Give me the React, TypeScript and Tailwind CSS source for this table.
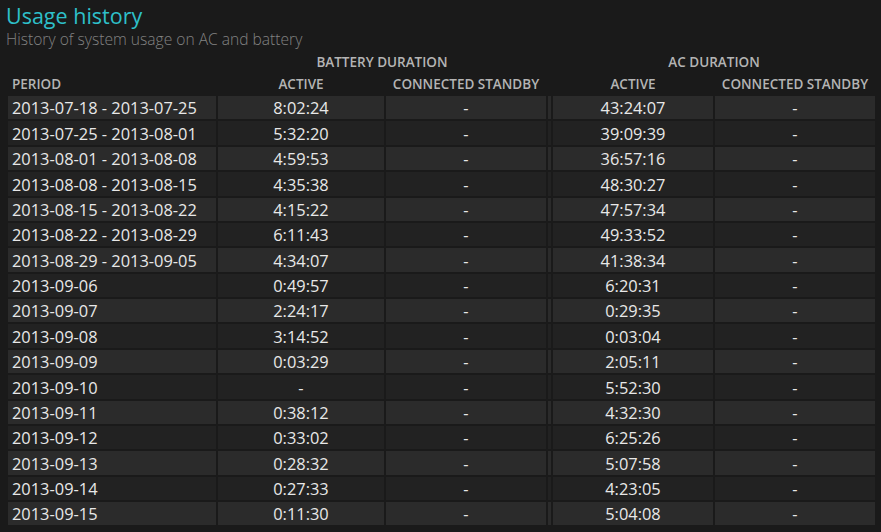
const rows: [string, string, string, string, string][] = [
  ['2013-07-18 - 2013-07-25', '8:02:24', '-', '43:24:07', '-'],
  ['2013-07-25 - 2013-08-01', '5:32:20', '-', '39:09:39', '-'],
  ['2013-08-01 - 2013-08-08', '4:59:53', '-', '36:57:16', '-'],
  ['2013-08-08 - 2013-08-15', '4:35:38', '-', '48:30:27', '-'],
  ['2013-08-15 - 2013-08-22', '4:15:22', '-', '47:57:34', '-'],
  ['2013-08-22 - 2013-08-29', '6:11:43', '-', '49:33:52', '-'],
  ['2013-08-29 - 2013-09-05', '4:34:07', '-', '41:38:34', '-'],
  ['2013-09-06', '0:49:57', '-', '6:20:31', '-'],
  ['2013-09-07', '2:24:17', '-', '0:29:35', '-'],
  ['2013-09-08', '3:14:52', '-', '0:03:04', '-'],
  ['2013-09-09', '0:03:29', '-', '2:05:11', '-'],
  ['2013-09-10', '-', '-', '5:52:30', '-'],
  ['2013-09-11', '0:38:12', '-', '4:32:30', '-'],
  ['2013-09-12', '0:33:02', '-', '6:25:26', '-'],
  ['2013-09-13', '0:28:32', '-', '5:07:58', '-'],
  ['2013-09-14', '0:27:33', '-', '4:23:05', '-'],
  ['2013-09-15', '0:11:30', '-', '5:04:08', '-'],
];

export default function App() {
  return (
    <div
      className="h-[532px] w-[881px] overflow-hidden bg-[#1a1a1a] pl-[6px] text-[#e8e8e8]"
      style={{ fontFamily: '"Open Sans", "Noto Sans", sans-serif' }}
    >
      <h1 className="pt-[2px] text-[21.5px] leading-[28px] text-[#2ec0ca]">Usage history</h1>
      <p className="text-[15.6px] leading-[19px] font-light text-[#828282]">
        History of system usage on AC and battery
      </p>

      <table className="border-separate border-spacing-[2px] text-[16.4px]">
        <colgroup>
          <col className="w-[208px]" />
          <col className="w-[166px]" />
          <col className="w-[160px]" />
          <col className="w-[3px]" />
          <col className="w-[160px]" />
          <col className="w-[160px]" />
        </colgroup>
        <thead className="text-[13.5px] leading-none font-semibold uppercase text-[#b4b4b4]">
          <tr className="h-[20px]">
            <th className="p-0" />
            <th colSpan={2} className="p-0 pt-[3px] text-center font-semibold">
              Battery Duration
            </th>
            <th className="p-0" />
            <th colSpan={2} className="p-0 pt-[3px] text-center font-semibold">
              AC Duration
            </th>
          </tr>
          <tr className="h-[21px]">
            <th className="p-0 pl-[4px] pt-[2px] text-left font-semibold">Period</th>
            <th className="p-0 pt-[2px] text-center font-semibold">Active</th>
            <th className="p-0 pt-[2px] text-center font-semibold">Connected Standby</th>
            <th className="p-0" />
            <th className="p-0 pt-[2px] text-center font-semibold">Active</th>
            <th className="p-0 pt-[2px] text-center font-semibold">Connected Standby</th>
          </tr>
        </thead>
        <tbody>
          {rows.map((r, i) => {
            const bg = i % 2 === 0 ? 'bg-[#2b2b2b]' : 'bg-[#222222]';
            return (
              <tr key={r[0]} className="h-[23.375px]">
                <td className={`${bg} p-0 pl-[4px] pt-[2px] leading-none`}>{r[0]}</td>
                <td className={`${bg} p-0 pt-[2px] text-center leading-none`}>{r[1]}</td>
                <td className={`${bg} p-0 pt-[2px] text-center leading-none`}>{r[2]}</td>
                <td className={`${bg} p-0`} />
                <td className={`${bg} p-0 pt-[2px] text-center leading-none`}>{r[3]}</td>
                <td className={`${bg} p-0 pt-[2px] text-center leading-none`}>{r[4]}</td>
              </tr>
            );
          })}
        </tbody>
      </table>
    </div>
  );
}
